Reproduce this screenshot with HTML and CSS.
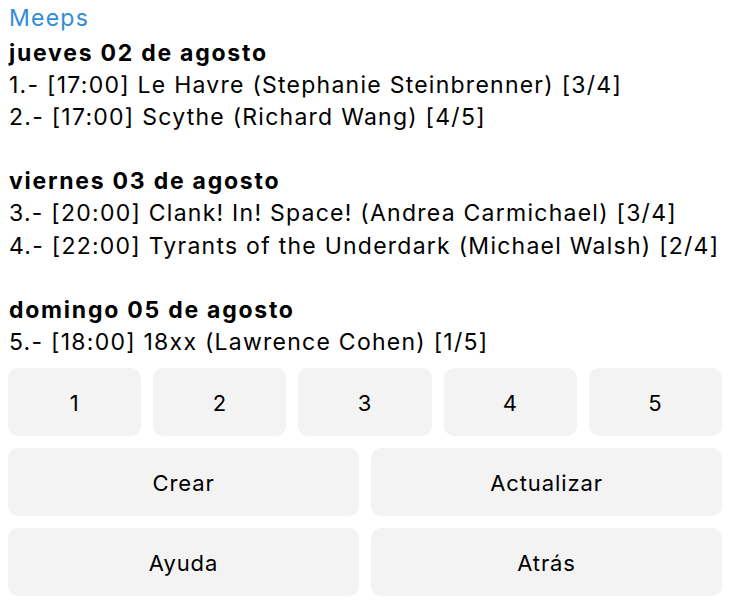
FILE: index.html
```html
<html>
<head>
    <meta charset="utf-8">
    <title>Meeps</title>
    <link rel="stylesheet" href="styles.css">
</head>
<body>
<div class="message">
    <div class="author">Meeps</div>
    <div class="text">
        <b>jueves 02 de agosto</b><br>
        1.- [17:00] Le Havre (Stephanie Steinbrenner) [3/4]<br>
        2.- [17:00] Scythe (Richard Wang) [4/5]<br>
        <br>
        <b>viernes 03 de agosto</b><br>
        3.- [20:00] Clank! In! Space! (Andrea Carmichael) [3/4]<br>
        4.- [22:00] Tyrants of the Underdark (Michael Walsh) [2/4]<br>
        <br>
        <b>domingo 05 de agosto</b><br>
        5.- [18:00] 18xx (Lawrence Cohen) [1/5]
    </div>
</div>
<div class="keyboard">
    <div class="keys five">
        <span class="key">1</span>
        <span class="key">2</span>
        <span class="key">3</span>
        <span class="key">4</span>
        <span class="key">5</span>
    </div>
    <div class="keys two">
        <span class="key">Crear</span>
        <span class="key">Actualizar</span>
    </div>
    <div class="keys two">
        <span class="key">Ayuda</span>
        <span class="key">Atrás</span>
    </div>
</div>
</body>
</html>
```

FILE: styles.css
```css
body {
    margin: 0;
    padding: 0 10px 0 8px;
    background: #fff;
    color: #000;
    font-family: Inter, "Noto Sans", sans-serif;
    font-size: 23px;
    letter-spacing: 1.25px;
}

.message {
    padding-left: 1px;
}

.author {
    color: #2f8cd8;
    line-height: 34px;
    padding-top: 1px;
    margin-bottom: 2px;
}

.text {
    line-height: 32.1px;
}

.text b {
    font-weight: 700;
    letter-spacing: 1.75px;
}

.keyboard {
    margin-top: 10px;
    display: flex;
    flex-direction: column;
    gap: 12px;
}

.keys {
    display: grid;
    gap: 12px;
}

.keys.five {
    grid-template-columns: repeat(5, 1fr);
}

.keys.two {
    grid-template-columns: repeat(2, 1fr);
}

.key {
    box-sizing: border-box;
    height: 68px;
    padding-top: 3px;
    display: flex;
    align-items: center;
    justify-content: center;
    background: #f3f3f3;
    border-radius: 10px;
    font-size: 22px;
    letter-spacing: 0.9px;
}
```
